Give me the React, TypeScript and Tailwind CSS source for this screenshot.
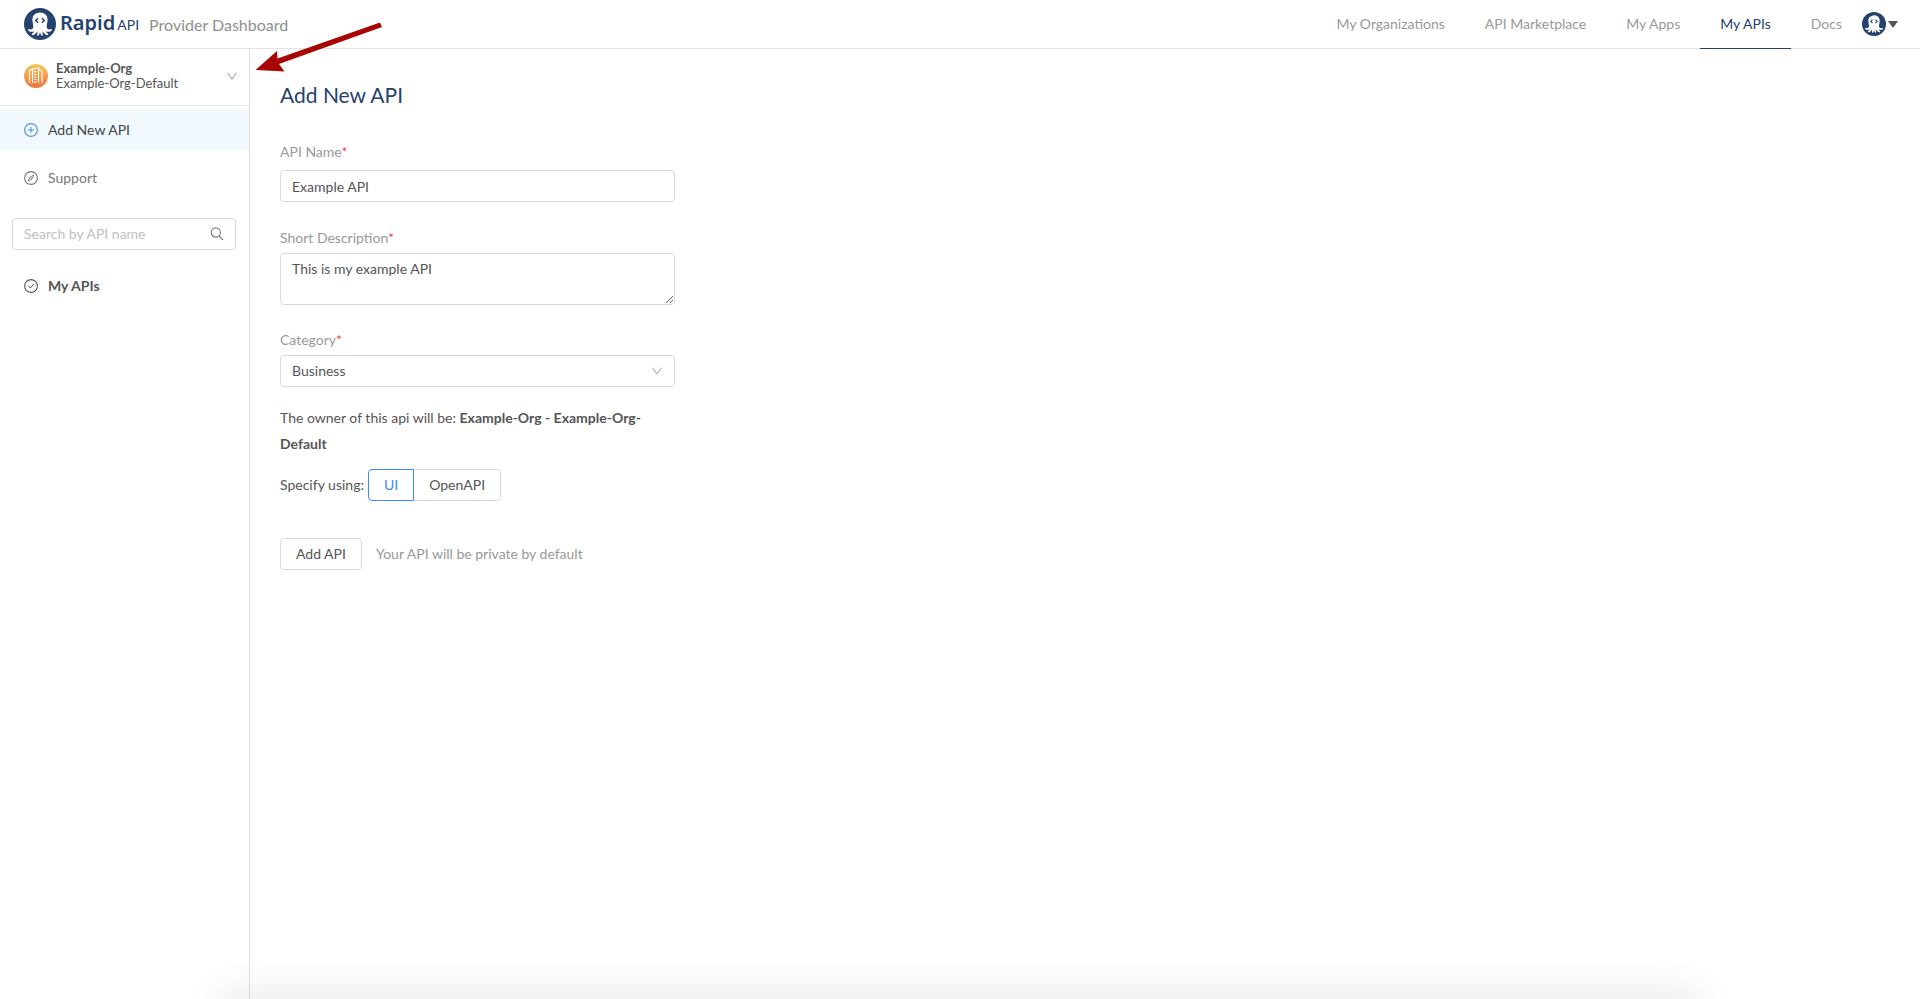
import React, { useState } from "react";

function Octopus({ className }: { className: string }) {
  return (
    <svg viewBox="0 0 32 32" className={className} aria-hidden="true">
      <circle cx="16" cy="16" r="16" fill="#25426f" />
      <path
        d="M16 4.500c-4.600 0-7.600 3-7.600 7.300 0 2.600.9 4.600.9 6.600 0 2-1 3-2.700 3.100-1 .1-2-.6-2.500.1-.5.9.8 2 2.700 2.200 1.300.1 2.400 0 3.400-.4-.5 1-1.500 1.600-2.200 2.300-.7.800 0 1.800 1.100 1.400 1.900-.7 3.400-2 4.300-3.800.2 1.200.1 2.300-.2 3.400-.2 1 1.200 1.300 1.600.5.500-.9.900-1.800 1.200-2.900.3 1.100.7 2 1.200 2.900.4.800 1.800.5 1.600-.5-.3-1.100-.4-2.200-.2-3.400.9 1.800 2.400 3.100 4.300 3.800 1.100.4 1.800-.6 1.100-1.400-.7-.7-1.700-1.300-2.200-2.300 1 .4 2.100.5 3.400.4 1.900-.2 3.200-1.300 2.700-2.200-.5-.7-1.500 0-2.500-.1-1.700-.1-2.700-1.100-2.700-3.100 0-2 .9-4 .9-6.600 0-4.300-3-7.300-7.600-7.300z"
        fill="#fff"
      />
      <path
        d="M14 10.300l-2.200 2.200 2.200 2.200M18 10.300l2.200 2.200-2.200 2.200"
        fill="none"
        stroke="#25426f"
        strokeWidth="1.500"
      />
    </svg>
  );
}

function OrgIcon() {
  return (
    <svg viewBox="0 0 24 24" className="size-6 shrink-0" aria-hidden="true">
      <defs>
        <linearGradient id="org" x1="0" y1="0" x2="0" y2="1">
          <stop offset="0" stopColor="#fbc659" />
          <stop offset="1" stopColor="#ee7440" />
        </linearGradient>
      </defs>
      <circle cx="12" cy="12" r="12" fill="url(#org)" />
      <g fill="none" stroke="#fff" strokeWidth="1.100">
        <path d="M5.500 19V6.500L8.500 5v14M8.500 5L14.500 4v15M14.500 5l3.500 2.500V18.500" />
        <path d="M10 8l2.500-.5M10 10.500h2.500M10 13h2.500M10 15.500h2.500M10 18h2.500" strokeWidth="1.200" />
      </g>
    </svg>
  );
}

function Chevron({ className }: { className: string }) {
  return (
    <svg viewBox="0 0 12 12" className={className} fill="none" stroke="currentColor" aria-hidden="true">
      <path d="M1.500 2.800L6 9l4.500-6.200" strokeWidth="1.100" />
    </svg>
  );
}

function RoundIcon({ className, children }: { className: string; children: React.ReactNode }) {
  return (
    <svg viewBox="0 0 14 14" className={className} fill="none" stroke="currentColor" aria-hidden="true">
      <circle cx="7" cy="7" r="6.400" strokeWidth="1.100" />
      {children}
    </svg>
  );
}

const navLinks = [
  { label: "My Organizations" },
  { label: "API Marketplace" },
  { label: "My Apps" },
  { label: "My APIs", active: true },
  { label: "Docs" },
];

function Header() {
  return (
    <header className="flex h-[49px] items-stretch justify-between border-b border-[#e4e4e4] pr-[22px] pl-6">
      <div className="flex items-center gap-2.5">
        <a href="#home" className="flex items-center gap-1 text-[#25426f]">
          <Octopus className="size-8" />
          <span className="flex items-baseline gap-0.5">
            <span className="font-['Noto_Sans',sans-serif] text-xl leading-8 font-semibold">Rapid</span>
            <span className="text-sm leading-8">API</span>
          </span>
        </a>
        <span className="pt-0.5 text-base text-[#8f8f8f]">Provider Dashboard</span>
      </div>
      <div className="flex items-stretch">
        <nav className="flex items-stretch">
          {navLinks.map((link) => (
            <a
              key={link.label}
              href="#nav"
              className={
                link.active
                  ? "-mb-px flex items-center border-b border-[#25426f] px-5 text-[#25426f]"
                  : "-mb-px flex items-center border-b border-transparent px-5 text-[#999]"
              }
            >
              {link.label}
            </a>
          ))}
        </nav>
        <button type="button" aria-label="Account" className="flex items-center gap-0.5">
          <Octopus className="size-6" />
          <svg viewBox="0 0 10 7" className="h-[7px] w-2.5" aria-hidden="true">
            <path d="M0 0h10L5 7z" fill="#555" />
          </svg>
        </button>
      </div>
    </header>
  );
}

function Sidebar() {
  return (
    <aside className="w-[250px] shrink-0 border-r border-[#e0e0e0]">
      <button
        type="button"
        className="flex h-[57px] w-full items-center border-b border-[#e8e8e8] pr-[11px] pb-0.5 pl-6 text-left"
      >
        <OrgIcon />
        <span className="ml-2 flex-1 text-[13px] leading-[15px]">
          <span className="block font-bold">Example-Org</span>
          <span className="block">Example-Org-Default</span>
        </span>
        <Chevron className="size-3 text-[#aaa]" />
      </button>
      <a href="#add" className="mt-1 flex h-10 items-center gap-2.5 bg-[#f1f8fe] pl-6 text-[#444]">
        <RoundIcon className="size-3.5 text-[#4a90e2]">
          <path d="M7 4v6M4 7h6" />
        </RoundIcon>
        Add New API
      </a>
      <a href="#support" className="mt-2 flex h-10 items-center gap-2.5 pl-6 text-[#777]">
        <RoundIcon className="size-3.5">
          <path d="M10 4L8 8l-4 2 2-4zM6 6l2 2" strokeWidth=".9" />
        </RoundIcon>
        Support
      </a>
      <label className="mt-5 mr-[13px] ml-3 flex h-8 items-center rounded border border-[#d9d9d9] px-[11px]">
        <input
          type="text"
          aria-label="Search by API name"
          placeholder="Search by API name"
          className="min-w-0 flex-1 outline-none placeholder:text-[#bfbfbf]"
        />
        <svg viewBox="0 0 14 14" className="size-3.5 text-[#777]" fill="none" stroke="currentColor" aria-hidden="true">
          <circle cx="5.800" cy="5.500" r="4.600" strokeWidth="1.100" />
          <path d="M9 8.800l4 4" strokeWidth="1.200" />
        </svg>
      </label>
      <a href="#apis" className="mt-4 flex h-10 items-center gap-2.5 pl-6 font-bold">
        <RoundIcon className="size-3.5">
          <path d="M4.200 6.800l2.100 2.300 3.500-4.100" />
        </RoundIcon>
        My APIs
      </a>
    </aside>
  );
}

function FieldLabel({ htmlFor, children }: { htmlFor: string; children: string }) {
  return (
    <label htmlFor={htmlFor} className="text-[#999]">
      {children}
      <span className="text-[#e5484d]">*</span>
    </label>
  );
}

function SpecOption({
  label,
  selected,
  onSelect,
  side,
}: {
  label: string;
  selected: boolean;
  onSelect: () => void;
  side: "left" | "right";
}) {
  return (
    <label
      className={[
        "flex h-8 cursor-pointer items-center border px-[15px]",
        side === "left" ? "rounded-l" : "-ml-px rounded-r",
        selected ? "z-10 border-[#3c8cf5] text-[#3c8cf5]" : "border-[#d9d9d9]",
      ].join(" ")}
    >
      <input type="radio" name="spec" className="sr-only" checked={selected} onChange={onSelect} />
      {label}
    </label>
  );
}

function AddApiForm() {
  const [spec, setSpec] = useState("UI");
  return (
    <form className="flex w-[395px] flex-col" onSubmit={(e) => e.preventDefault()}>
      <h1 className="text-[21px] leading-8 text-[#25426f]">Add New API</h1>

      <div className="mt-[30px] flex flex-col gap-[7px]">
        <FieldLabel htmlFor="name">API Name</FieldLabel>
        <input
          id="name"
          type="text"
          defaultValue="Example API"
          className="h-8 rounded border border-[#d9d9d9] px-[11px] outline-none"
        />
      </div>

      <div className="mt-[25px] flex flex-col gap-1">
        <FieldLabel htmlFor="description">Short Description</FieldLabel>
        <textarea
          id="description"
          defaultValue="This is my example API"
          className="h-[52px] resize-y rounded border border-[#d9d9d9] px-[11px] py-1 outline-none"
        />
      </div>

      <div className="mt-6 flex flex-col gap-1">
        <FieldLabel htmlFor="category">Category</FieldLabel>
        <div className="relative flex">
          <select
            id="category"
            defaultValue="Business"
            className="h-8 flex-1 appearance-none rounded border border-[#d9d9d9] bg-white px-[11px] outline-none"
          >
            <option>Business</option>
          </select>
          <Chevron className="pointer-events-none absolute top-2.5 right-3 size-3 text-[#b5b5b5]" />
        </div>
      </div>

      <p className="mt-[18px] leading-[26px]">
        The owner of this api will be: <b>Example-Org - Example-Org-Default</b>
      </p>

      <div className="mt-3 flex items-center">
        <span className="mr-1">Specify using:</span>
        <SpecOption label="UI" side="left" selected={spec === "UI"} onSelect={() => setSpec("UI")} />
        <SpecOption
          label="OpenAPI"
          side="right"
          selected={spec === "OpenAPI"}
          onSelect={() => setSpec("OpenAPI")}
        />
      </div>

      <div className="mt-[37px] flex items-center gap-3.5">
        <button type="submit" className="h-8 rounded border border-[#d9d9d9] px-[15px]">
          Add API
        </button>
        <span className="text-[#999]">Your API will be private by default</span>
      </div>
    </form>
  );
}

export default function App() {
  return (
    <div className="relative flex min-h-screen flex-col overflow-hidden bg-white font-[Lato,sans-serif] text-sm leading-[22px] text-[#555]">
      <Header />
      <div className="flex flex-1 items-stretch">
        <Sidebar />
        <main className="flex-1 p-[30px]">
          <AddApiForm />
        </main>
      </div>

      <svg
        viewBox="0 0 130 52"
        className="pointer-events-none absolute top-[21px] left-[254px] h-[52px] w-[130px]"
        aria-hidden="true"
      >
        <path d="M126 1.500L23.500 37.500 23 30 1.500 49 30.500 50.500 25 43 128 6z" fill="#a80505" />
      </svg>
      <div className="pointer-events-none absolute right-[222px] -bottom-5 left-[222px] h-5 shadow-[0_0_40px_rgba(0,0,0,0.16)]" />
    </div>
  );
}
